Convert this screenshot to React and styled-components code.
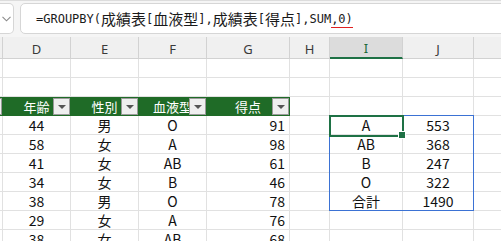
import React from "react";
import styled, { createGlobalStyle } from "styled-components";

const GlobalStyle = createGlobalStyle`
  html, body { margin: 0; padding: 0; background: #ffffff; }
  body { overflow: hidden; }
`;

const Root = styled.div`
  width: 501px;
  height: 241px;
  overflow: hidden;
  display: flex;
  flex-direction: column;
  background: #fff;
`;

const FormulaBar = styled.div`
  flex-shrink: 0;
  width: 530px;
  height: 37px;
  box-sizing: border-box;
  border-top: 1px solid #dcdcdc;
  background: #f5f5f5;
  display: flex;
  align-items: stretch;
  gap: 6px;
  padding: 2px 0 3px 0;
`;

const NameBox = styled.div`
  width: 14px;
  box-sizing: border-box;
  background: #fff;
  border: 1px solid #d6d6d6;
  border-left: none;
  border-radius: 0 5px 5px 0;
  display: flex;
  align-items: center;
  justify-content: flex-start;
  padding-left: 2px;
`;

const FormulaBox = styled.div`
  flex: 1;
  box-sizing: border-box;
  background: #fff;
  border: 1px solid #d6d6d6;
  border-radius: 5px;
  display: flex;
  align-items: center;
  padding-left: 15px;
  white-space: nowrap;
  color: #1a1a1a;
`;

const Mono = styled.span`
  font-family: "DejaVu Sans Mono", "Liberation Mono", monospace;
  font-size: 12px;
  color: #1a1a1a;
`;

const Cjk = styled.span`
  font-family: "Noto Sans CJK JP", sans-serif;
  font-size: 15px;
  color: #1a1a1a;
`;

const ErrMark = styled.span`
  display: inline-block;
  border-bottom: 1.5px solid #e02020;
  line-height: 15px;
`;

const Sheet = styled.div`
  flex-shrink: 0;
  display: grid;
  grid-template-columns: 3px 68px 68px 68px 83px 40px 73px 71px 40px;
  grid-template-rows: 22px repeat(10, 19px);
  width: 514px;
`;

const ColHead = styled.div`
  grid-row: 1;
  grid-column: ${(p) => p.$col};
  box-sizing: border-box;
  background: ${(p) => (p.$selected ? "#dcdcdc" : "#f0f0f0")};
  border-right: 1px solid #d2d2d2;
  border-bottom: ${(p) => (p.$selected ? "2px solid #1e7145" : "1px solid #d2d2d2")};
  display: flex;
  align-items: center;
  justify-content: center;
  padding-top: 2px;
  font-family: "Noto Sans", "Open Sans", sans-serif;
  font-size: 13px;
  color: ${(p) => (p.$selected ? "#1e6b3c" : "#3a3a3a")};
`;

const Cell = styled.div`
  grid-row: ${(p) => p.$row};
  grid-column: ${(p) => p.$col};
  position: relative;
  box-sizing: border-box;
  border-right: 1px solid ${(p) => (p.$green ? "#1f6b27" : "#e1e1e1")};
  border-bottom: 1px solid ${(p) => (p.$green ? "#1f6b27" : "#e1e1e1")};
  background: ${(p) => (p.$green ? "#1f6b27" : "#fff")};
  color: ${(p) => (p.$green ? "#fff" : "#111")};
  display: flex;
  align-items: center;
  justify-content: ${(p) => (p.$align === "right" ? "flex-end" : "center")};
  padding-right: ${(p) => (p.$align === "right" ? "4px" : "0")};
  font-family: "Noto Sans CJK JP", sans-serif;
  font-size: ${(p) => (p.$green ? "13px" : "14px")};
  line-height: 1;
  overflow: hidden;
  white-space: nowrap;
`;

const FilterBtn = styled.div`
  position: absolute;
  top: 1px;
  right: 0;
  width: 17px;
  height: 17px;
  box-sizing: border-box;
  background: #efefef;
  border: 1px solid #9a9a9a;
  display: flex;
  align-items: center;
  justify-content: center;
`;

const Arrow = styled.div`
  width: 0;
  height: 0;
  border-left: 4px solid transparent;
  border-right: 4px solid transparent;
  border-top: 4px solid #555;
  margin-top: 1px;
`;

const SpillBorder = styled.div`
  grid-column: 7 / 9;
  grid-row: 5 / 10;
  border: 1.5px solid #3b72d4;
  margin: -1px 0 0 -1px;
  pointer-events: none;
  z-index: 1;
`;

const ActiveCell = styled.div`
  grid-column: 7 / 8;
  grid-row: 5 / 6;
  position: relative;
  border: 2px solid #1e7145;
  margin: -1px -1px -2px -1px;
  pointer-events: none;
  z-index: 2;
`;

const FillHandle = styled.div`
  position: absolute;
  right: -4px;
  bottom: -4px;
  width: 6px;
  height: 6px;
  background: #1e7145;
  border: 1px solid #fff;
`;

const columns = ["", "D", "E", "F", "G", "H", "I", "J", ""];

const headerLabels = ["", "年齢", "性別", "血液型", "得点"];

const data = [
  ["44", "男", "O", "91", "A", "553"],
  ["58", "女", "A", "98", "AB", "368"],
  ["41", "女", "AB", "61", "B", "247"],
  ["34", "女", "B", "46", "O", "322"],
  ["38", "男", "O", "78", "合計", "1490"],
  ["29", "女", "A", "76", "", ""],
  ["38", "女", "AB", "68", "", ""],
];

function EmptyRow({ row }) {
  return columns.map((_, i) => <Cell key={i} $row={row} $col={i + 1} />);
}

export default function App() {
  return (
    <Root>
      <GlobalStyle />
      <FormulaBar>
        <NameBox>
          <svg width="9" height="6" viewBox="0 0 9 6">
            <path d="M0.5 0.8 L4.5 4.8 L8.5 0.8" fill="none" stroke="#8a8a8a" strokeWidth="1.1" />
          </svg>
        </NameBox>
        <FormulaBox>
          <Mono>=GROUPBY(</Mono>
          <Cjk>成績表</Cjk>
          <Mono>[</Mono>
          <Cjk>血液型</Cjk>
          <Mono>],</Mono>
          <Cjk>成績表</Cjk>
          <Mono>[</Mono>
          <Cjk>得点</Cjk>
          <Mono>],SUM</Mono>
          <ErrMark>
            <Mono>,0)</Mono>
          </ErrMark>
        </FormulaBox>
      </FormulaBar>
      <Sheet>
        {columns.map((c, i) => (
          <ColHead key={"h" + i} $col={i + 1} $selected={c === "I"}>
            {c}
          </ColHead>
        ))}
        <EmptyRow row={2} />
        <EmptyRow row={3} />
        {columns.map((_, i) =>
          i < 5 ? (
            <Cell key={"g" + i} $row={4} $col={i + 1} $green>
              {headerLabels[i]}
              <FilterBtn>
                <Arrow />
              </FilterBtn>
            </Cell>
          ) : (
            <Cell key={"g" + i} $row={4} $col={i + 1} />
          )
        )}
        {data.map((r, ri) => {
          const row = ri + 5;
          return (
            <React.Fragment key={"r" + ri}>
              <Cell $row={row} $col={1} />
              <Cell $row={row} $col={2}>{r[0]}</Cell>
              <Cell $row={row} $col={3}>{r[1]}</Cell>
              <Cell $row={row} $col={4}>{r[2]}</Cell>
              <Cell $row={row} $col={5} $align="right">{r[3]}</Cell>
              <Cell $row={row} $col={6} />
              <Cell $row={row} $col={7}>{r[4]}</Cell>
              <Cell $row={row} $col={8}>{r[5]}</Cell>
              <Cell $row={row} $col={9} />
            </React.Fragment>
          );
        })}
        <SpillBorder />
        <ActiveCell>
          <FillHandle />
        </ActiveCell>
      </Sheet>
    </Root>
  );
}
